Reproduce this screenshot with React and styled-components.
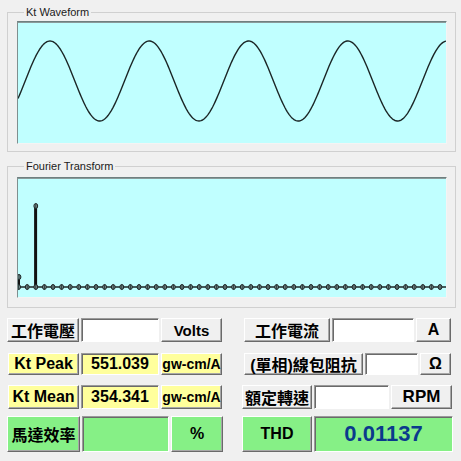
import React from 'react'
import styled, { createGlobalStyle } from 'styled-components'

const GlobalStyle = createGlobalStyle`
    html, body {
        margin: 0;
        padding: 0;
        background: #f0f0f0;
    }
    body {
        font-family: "Liberation Sans", "Noto Sans CJK TC", sans-serif;
    }
`

const Window = styled.div`
    width: 461px;
    height: 461px;
    box-sizing: border-box;
    padding: 6px 5px 0 7px;
    background: #f0f0f0;
    overflow: hidden;
`
const Group = styled.fieldset`
    margin: ${p => p.$mt || 0}px 0 0 0;
    padding: ${p => p.$pt}px 8px ${p => p.$pb}px 9px;
    border: 1px solid #d0d0d0;
    min-width: 0;
`
const Legend = styled.legend`
    font-family: "Liberation Sans", sans-serif;
    font-size: 11px;
    line-height: 13px;
    color: #202020;
    padding: 0 2px;
    margin-left: 7px;
`
const Plot = styled.div`
    height: ${p => p.$h}px;
    box-sizing: border-box;
    background: #c0ffff;
    border-style: solid;
    border-width: 1px;
    border-color: #6f7f7f #f4f4f4 #f4f4f4 #7f8f8f;
    box-shadow: inset 0 1px 0 #8a9a9a;
    overflow: hidden;

    svg {
        display: block;
    }
`
const Panel = styled.div`
    display: grid;
    grid-template-columns: 215px 210px;
    column-gap: 20px;
    margin-top: 10px;
`
const Column = styled.div`
    display: flex;
    flex-direction: column;
`
const Row = styled.div`
    display: flex;
    gap: 2px;
    height: ${p => p.$h}px;
    margin-top: ${p => p.$mt || 0}px;
    padding-left: ${p => p.$pl || 0}px;
`
const Cell = styled.div`
    width: ${p => p.$w}px;
    flex: none;
    box-sizing: border-box;
    display: flex;
    align-items: center;
    justify-content: center;
    white-space: nowrap;
    overflow: hidden;
    background: ${p => p.$bg || '#f0f0f0'};
    font-weight: bold;
    font-size: ${p => p.$fs || 16}px;
    letter-spacing: ${p => p.$ls || 0}px;
    color: ${p => p.$color || '#000'};
    border: 1px solid;
    border-color: ${p => p.$sunken
        ? '#9a9a9a #ffffff #ffffff #9a9a9a'
        : '#ffffff #6a6a6a #6a6a6a #ffffff'};
    box-shadow: ${p => p.$sunken
        ? 'inset 1px 1px 0 #6a6a6a'
        : 'inset -1px -1px 0 #a8a8a8'};
`

const WIDTH = 428

const sinePath = () => {
    let d = ''
    for (let x = 0; x <= WIDTH; x++) {
        const y = 59 - 40 * Math.cos((2 * Math.PI * (x - 32)) / 99.3)
        d += (x === 0 ? 'M' : 'L') + x + ' ' + y.toFixed(2) + ' '
    }
    return d
}

const Marker = ({ x, y }) => (
    <g>
        <ellipse cx={x} cy={y} rx="1.9" ry="2.5" fill="#7d9a9a" stroke="#1c2424" strokeWidth="1" />
        <line x1={x} y1={y - 2.5} x2={x} y2={y + 2.5} stroke="#1c2424" strokeWidth="0.8" />
    </g>
)

const Waveform = () => (
    <svg width={WIDTH} height="121">
        <path d={sinePath()} fill="none" stroke="#1b2626" strokeWidth="1.4" />
    </svg>
)

const Spectrum = () => {
    const base = 109
    const tops = { 0: 99, 2: 28 }
    const points = []
    for (let k = 0; k <= 50; k++) points.push(k)
    return (
        <svg width={WIDTH} height="119">
            <line x1="0" y1={base} x2={WIDTH} y2={base} stroke="#1b2626" strokeWidth="1.6" />
            <line x1="1" y1="99" x2="1" y2={base} stroke="#111" strokeWidth="2" />
            <line x1="17.6" y1="28" x2="17.6" y2={base} stroke="#111" strokeWidth="3" />
            {points.map(k => (
                <Marker key={k} x={8.6 * k + 0.6} y={base} />
            ))}
            {Object.entries(tops).map(([k, y]) => (
                <Marker key={'t' + k} x={8.6 * k + (k === '0' ? 1 : 0.6)} y={y} />
            ))}
        </svg>
    )
}

const yellow = '#ffff9c'
const green = '#86f086'

const App = () => {
    return (
        <Window>
            <GlobalStyle />
            <Group $pt={2} $pb={7}>
                <Legend>Kt Waveform</Legend>
                <Plot $h={123}>
                    <Waveform />
                </Plot>
            </Group>
            <Group $mt={8} $pt={4} $pb={9}>
                <Legend>Fourier Transform</Legend>
                <Plot $h={121}>
                    <Spectrum />
                </Plot>
            </Group>
            <Panel>
                <Column>
                    <Row $h={24}>
                        <Cell $w={72}>工作電壓</Cell>
                        <Cell $w={78} $bg="#ffffff" $sunken />
                        <Cell $w={61} $fs={15}>Volts</Cell>
                    </Row>
                    <Row $h={22} $mt={11} $pl={1}>
                        <Cell $w={71} $bg={yellow}>Kt Peak</Cell>
                        <Cell $w={78} $bg={yellow} $sunken>551.039</Cell>
                        <Cell $w={61} $bg={yellow} $fs={14}>gw-cm/A</Cell>
                    </Row>
                    <Row $h={24} $mt={10} $pl={1}>
                        <Cell $w={71} $bg={yellow}>Kt Mean</Cell>
                        <Cell $w={78} $bg={yellow} $sunken>354.341</Cell>
                        <Cell $w={61} $bg={yellow} $fs={14}>gw-cm/A</Cell>
                    </Row>
                    <Row $h={36} $mt={7}>
                        <Cell $w={73} $bg={green}>馬達效率</Cell>
                        <Cell $w={87} $bg={green} $sunken />
                        <Cell $w={52} $bg={green}>%</Cell>
                    </Row>
                </Column>
                <Column>
                    <Row $h={24} $pl={2}>
                        <Cell $w={86}>工作電流</Cell>
                        <Cell $w={82} $bg="#ffffff" $sunken />
                        <Cell $w={35}>A</Cell>
                    </Row>
                    <Row $h={22} $mt={11} $pl={2}>
                        <Cell $w={119}>(單相)線包阻抗</Cell>
                        <Cell $w={53} $bg="#ffffff" $sunken />
                        <Cell $w={31}>Ω</Cell>
                    </Row>
                    <Row $h={24} $mt={10}>
                        <Cell $w={70}>額定轉速</Cell>
                        <Cell $w={75} $bg="#ffffff" $sunken />
                        <Cell $w={61} $fs={17}>RPM</Cell>
                    </Row>
                    <Row $h={36} $mt={7}>
                        <Cell $w={70} $bg={green}>THD</Cell>
                        <Cell $w={139} $bg={green} $fs={22} $color="#0b3a8c" $sunken>0.01137</Cell>
                    </Row>
                </Column>
            </Panel>
        </Window>
    )
}

export default App
